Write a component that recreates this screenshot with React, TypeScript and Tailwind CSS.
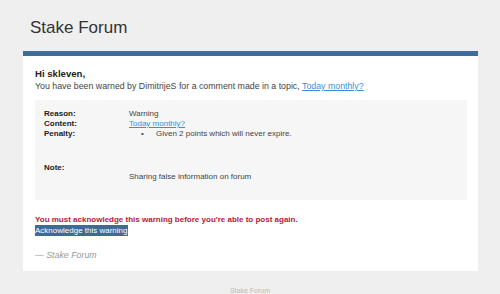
export default function App() {
  const font = { fontFamily: '"Liberation Sans", Arial, sans-serif' };
  return (
    <div
      className="h-[294px] w-[500px] overflow-hidden bg-[#efefef] text-[#333]"
      style={font}
    >
      <div className="px-[30px] pt-[17px] text-[17px] leading-[22px] text-[#333]">
        Stake Forum
      </div>

      <div className="mx-[23px] mt-[12px] w-[455px] border-t-[5px] border-[#3e6d9b] bg-white px-[12px] pb-[10px] pt-[12px]">
        <div className="text-[9.6px] font-bold leading-[12px] text-[#222]">Hi skleven,</div>
        <div className="text-[8.8px] leading-[12px] text-[#444]">
          You have been warned by DimitrijeS for a comment made in a topic,{' '}
          <a className="text-[#3b8fd6] underline">Today monthly?</a>
        </div>

        <div className="mt-[8px] w-[432px] bg-[#f6f6f6] px-[9px] pb-[18px] pt-[9px] text-[8px] leading-[10px]">
          <div className="grid grid-cols-[85px_1fr]">
            <div className="font-bold text-[#222]">Reason:</div>
            <div className="text-[#444]">Warning</div>
            <div className="font-bold text-[#222]">Content:</div>
            <div>
              <a className="text-[#3b8fd6] underline">Today monthly?</a>
            </div>
            <div className="font-bold text-[#222]">Penalty:</div>
            <ul className="pb-[24px] text-[#444]">
              <li className="flex">
                <span className="w-[27px] pl-[12px]">•</span>
                <span>Given 2 points which will never expire.</span>
              </li>
            </ul>
            <div className="font-bold text-[#222]">Note:</div>
            <div className="pt-[9px] text-[#444]">Sharing false information on forum</div>
          </div>
        </div>

        <div className="mt-[14px] text-[8px] font-bold leading-[11px] text-[#b5203a]">
          You must acknowledge this warning before you're able to post again.
        </div>
        <div className="text-[8px] leading-[12px]">
          <a className="bg-[#3e6a97] py-[1px] text-white">Acknowledge this warning</a>
        </div>
        <div className="mt-[12px] text-[8.8px] italic leading-[12px] text-[#999]">
          — Stake Forum
        </div>
      </div>

      <div className="pt-[15px] text-center text-[7px] leading-[10px] text-[#bbb]">
        Stake Forum
      </div>
    </div>
  );
}
